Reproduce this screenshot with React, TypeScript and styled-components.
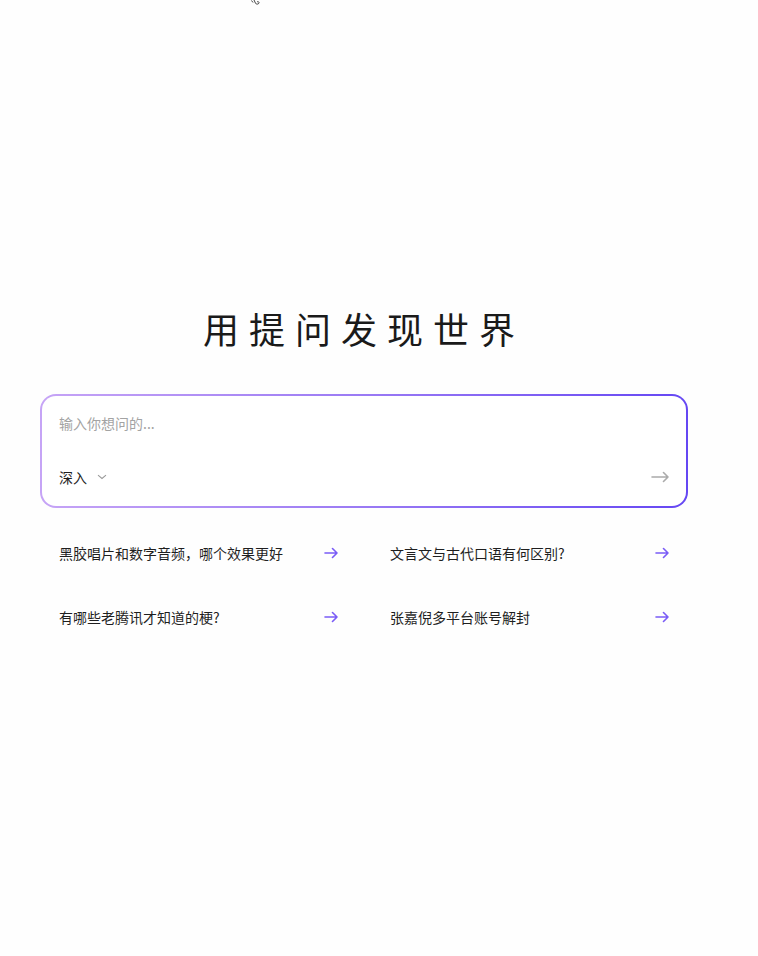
import React from "react";
import styled, { createGlobalStyle } from "styled-components";

const Global = createGlobalStyle`
  html, body { margin: 0; padding: 0; background: #fefefe; }
  body { font-family: "Noto Sans CJK SC", "Noto Sans", sans-serif; color: #1f1f1f; }
  * { box-sizing: border-box; }
`;

const Page = styled.div`
  position: relative;
  width: 758px;
  min-height: 956px;
  padding: 308px 0 0 40px;
`;

const Stray = styled.svg`
  position: absolute;
  left: 250px;
  top: 0;
`;

const Main = styled.main`
  width: 648px;
  display: flex;
  flex-direction: column;
  align-items: stretch;
`;

const Title = styled.h1`
  margin: 0 0 46px;
  text-align: center;
  font-size: 36px;
  line-height: 40px;
  font-weight: 400;
  letter-spacing: 10px;
  color: #1a1a1a;
`;

const InputBox = styled.div`
  height: 114px;
  border: 2px solid transparent;
  border-radius: 16px;
  background: linear-gradient(#fff, #fff) padding-box,
    linear-gradient(90deg, #c6a4f6 0%, #9a7af4 50%, #6547f3 100%) border-box;
  padding: 17px 17px 17px 17px;
  display: flex;
  flex-direction: column;
  justify-content: space-between;
`;

const Placeholder = styled.div`
  font-size: 14px;
  line-height: 20px;
  color: #a3a3a3;
`;

const Controls = styled.div`
  display: flex;
  align-items: center;
  justify-content: space-between;
  height: 24px;
`;

const ModeButton = styled.div`
  display: flex;
  align-items: center;
  gap: 10px;
  font-size: 14px;
  line-height: 20px;
  color: #1f1f1f;
`;

const SendButton = styled.div`
  display: flex;
  align-items: center;
`;

const Suggestions = styled.div`
  display: grid;
  grid-template-columns: 1fr 1fr;
  column-gap: 52px;
  row-gap: 44px;
  padding: 35px 19px 0;
`;

const Suggestion = styled.div`
  display: flex;
  align-items: center;
  justify-content: space-between;
  font-size: 14px;
  line-height: 20px;
  color: #1f1f1f;
`;

const Arrow = ({ color, w = 14 }: { color: string; w?: number }) => (
  <svg width={w} height="12" viewBox={`0 0 ${w} 12`} fill="none">
    <path d={`M1 6H${w - 1}M${w - 5.5} 1.5L${w - 1} 6L${w - 5.5} 10.5`} stroke={color} strokeWidth="1.6" strokeLinecap="round" strokeLinejoin="round" />
  </svg>
);

const items = [
  "黑胶唱片和数字音频，哪个效果更好",
  "文言文与古代口语有何区别?",
  "有哪些老腾讯才知道的梗?",
  "张嘉倪多平台账号解封",
];

export default function App() {
  return (
    <>
      <Global />
      <Page>
        <Stray width="12" height="6" viewBox="0 0 12 6">
          <path d="M1.5 0.5L3 2.5M4 0L5.5 3.2C6 4.5 8.5 4.5 9 3C9.3 2 8 1 7 2" stroke="#444" strokeWidth="1" fill="none" />
        </Stray>
        <Main>
          <Title>用提问发现世界</Title>
          <InputBox>
            <Placeholder>输入你想问的...</Placeholder>
            <Controls>
              <ModeButton>
                深入
                <svg width="10" height="6" viewBox="0 0 10 6" fill="none">
                  <path d="M1 1.2L5 4.5L9 1.2" stroke="#9a9a9a" strokeWidth="1.1" />
                </svg>
              </ModeButton>
              <SendButton>
                <Arrow color="#ababab" w={18} />
              </SendButton>
            </Controls>
          </InputBox>
          <Suggestions>
            {items.map((t) => (
              <Suggestion key={t}>
                <span>{t}</span>
                <Arrow color="#7a5cf6" />
              </Suggestion>
            ))}
          </Suggestions>
        </Main>
      </Page>
    </>
  );
}
